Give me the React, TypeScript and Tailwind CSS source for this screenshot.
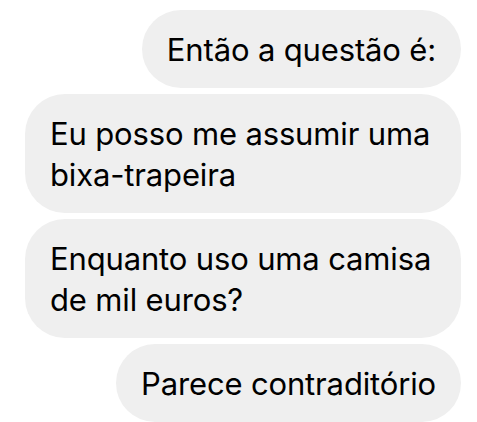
import React from "react";

const msgs = [
  "Então a questão é:",
  "Eu posso me assumir uma bixa-trapeira",
  "Enquanto uso uma camisa de mil euros?",
  "Parece contraditório",
];

export default function App() {
  return (
    <div
      className="w-[477px] h-[422px] bg-white overflow-hidden flex flex-col items-end gap-[6px] pt-[10px] pr-[16px]"
      style={{ fontFamily: "Inter, 'Liberation Sans', sans-serif" }}
    >
      {msgs.map((m) => (
        <div
          key={m}
          className="max-w-[436px] bg-[#efefef] text-black rounded-[40px] px-[25px] py-[18.5px] text-[31px] leading-[41px] tracking-[-0.15px]"
        >
          {m}
        </div>
      ))}
    </div>
  );
}
